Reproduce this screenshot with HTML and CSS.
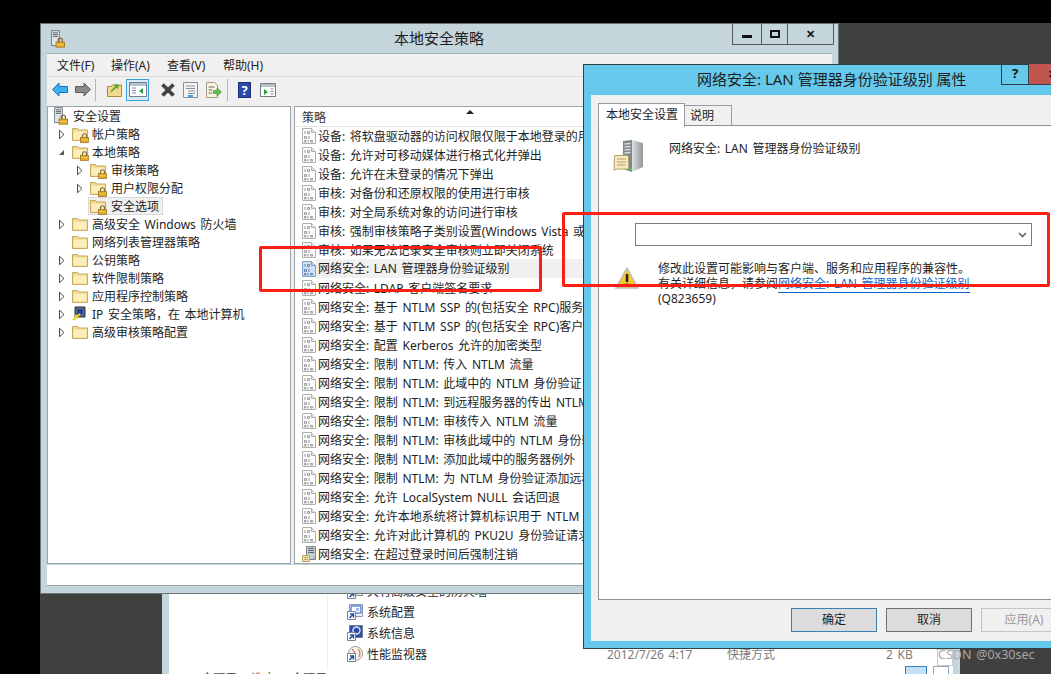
FILE: index.html
```html
<!DOCTYPE html>
<html lang="zh-CN">
<head>
    <meta charset="UTF-8">
    <title>本地安全策略</title>
    <link rel="stylesheet" href="styles.css">
</head>
<body>
    <svg class="defs" width="0" height="0">
        <defs>
            <symbol id="folder" viewBox="0 0 16 16">
                <path d="M.5 2.500h5l1 1.500h9v10.500H.5z" fill="#f1d88c" stroke="#c9a95c"/>
                <path d="M1.500 5.500h13v8h-13z" fill="#fbeebb"/>
            </symbol>
            <symbol id="lock" viewBox="0 0 10 11">
                <path d="M2.800 5V3a2.200 2.200 0 0 1 4.400 0v2" fill="none" stroke="#7d6a3a" stroke-width="1.300"/>
                <rect x=".5" y="5" width="9" height="5.500" fill="#dfa925" stroke="#99721c" stroke-width=".8"/>
                <path d="M1.500 7.500h7" stroke="#f3d26a"/>
            </symbol>
            <symbol id="policy" viewBox="0 0 14 16">
                <path d="M.5 .5h9l4 4v11H.5z" fill="#fbfbfb" stroke="#b0b0b0"/>
                <path d="M9.500 .5v4h4" fill="#e2e2e2" stroke="#b0b0b0"/>
                <path d="M3 3v3M5.500 3.500h2v2h-2zM2.500 8.500h2v2h-2zM7 8v3M2.500 12.500h1.500v1.500h-1.500zM6 12v2.500M8.500 12.500h2v1.500h-2z" fill="none" stroke="#9c9c9c"/>
            </symbol>
            <symbol id="policy-on" viewBox="0 0 14 16">
                <path d="M.5 .5h9l4 4v11H.5z" fill="#cfe0f5" stroke="#7e9fc9"/>
                <path d="M9.500 .5v4h4" fill="#b7cdea" stroke="#7e9fc9"/>
                <path d="M3 3v3M5.500 3.500h2v2h-2zM2.500 8.500h2v2h-2zM7 8v3M2.500 12.500h1.500v1.500h-1.500zM6 12v2.500M8.500 12.500h2v1.500h-2z" fill="none" stroke="#5f80ae"/>
            </symbol>
            <symbol id="server" viewBox="0 0 14 16">
                <path d="M4.500 .5h9v13h-9z" fill="#c9ced2" stroke="#7d8489"/>
                <path d="M6 2.500h6M6 4.500h6M6 6.500h6" stroke="#5d6468"/>
                <path d="M.5 9.500h7v6h-7z" fill="#f5e6b8" stroke="#b79f63"/>
                <path d="M2 11.500h4M2 13.500h4" stroke="#b79f63"/>
                <path d="M11 12h1.500" stroke="#58c04a"/>
            </symbol>
            <symbol id="shortcut" viewBox="0 0 9 9">
                <path d="M.5 .5h8v8h-8z" fill="#fff" stroke="#7b8490"/>
                <path d="M2.500 7l3-3M3 3h3.500v3.500" fill="none" stroke="#1a4fa0" stroke-width="1.500"/>
            </symbol>
            <symbol id="caret-open" viewBox="0 0 9 9">
                <path d="M2 7h5V2z" fill="#595959"/>
            </symbol>
            <symbol id="caret-closed" viewBox="0 0 9 11">
                <path d="M2.500 1.200l4.500 4.300-4.500 4.300z" fill="#fff" stroke="#4b4b4b"/>
            </symbol>
            <symbol id="sec-root" viewBox="0 0 17 20">
                <path d="M.5 .5h9v17h-9z" fill="#dfe3e6" stroke="#6d7478"/>
                <path d="M2 3h6M2 5h6M2 7h6" stroke="#555"/>
                <use href="#lock" x="5" y="8" width="11" height="12"/>
            </symbol>
        </defs>
    </svg>

    <div class="explorer">
        <div class="explorer-list">
            <div class="tool-row">
                <svg width="16" height="16" viewBox="0 0 16 16"><path d="M2.500 .5h13v12h-13z" fill="#f3f3f3" stroke="#8a8a8a"/><path d="M9 2h5v9H9z" fill="#c8392b"/><use href="#shortcut" x="0" y="7" width="9" height="9"/></svg>
                <span>具有高级安全的防火墙</span>
            </div>
            <div class="tool-row">
                <svg width="16" height="16" viewBox="0 0 16 16"><path d="M2.500 .5h13v12h-13z" fill="#e6eefb" stroke="#8a98a8"/><path d="M4 2h10v7H4z" fill="#fff" stroke="#1f55d0"/><path d="M9 4h3v3H9z" fill="#9dbdf0"/><use href="#shortcut" x="0" y="7" width="9" height="9"/></svg>
                <span>系统配置</span>
            </div>
            <div class="tool-row">
                <svg width="16" height="16" viewBox="0 0 16 16"><path d="M2.500 .5h13v12h-13z" fill="#2a4ea8" stroke="#6f7f95"/><circle cx="9.500" cy="5.500" r="3.500" fill="none" stroke="#dfe8fa" stroke-width="1.400"/><use href="#shortcut" x="0" y="7" width="9" height="9"/></svg>
                <span>系统信息</span>
            </div>
            <div class="tool-row">
                <svg width="16" height="16" viewBox="0 0 16 16"><circle cx="8.500" cy="7.500" r="7" fill="#f4f4f4" stroke="#9a9a9a"/><path d="M11 3c2.500 2 2.500 6 .5 8" fill="none" stroke="#e2913c" stroke-width="1.400"/><path d="M5 3l4 5" stroke="#c8392b"/><use href="#shortcut" x="0" y="7" width="9" height="9"/></svg>
                <span>性能监视器</span>
            </div>
        </div>
        <div class="explorer-status">34 个项目 &nbsp; 选中 1 个项目 1.08 KB</div>
        <div class="file-info">
            <span class="file-date">2012/7/26 4:17</span>
            <span class="file-type">快捷方式</span>
            <span class="file-size">2 KB</span>
        </div>
        <div class="file-check"></div>
        <div class="view-btns">
            <span class="view-btn view-on"></span>
            <span class="view-btn"></span>
        </div>
    </div>

    <div class="main-win">
        <div class="main-title">
            <svg class="title-icon" width="15" height="18"><use href="#sec-root"/></svg>
            <span class="main-title-text">本地安全策略</span>
            <div class="win-btns">
                <span class="win-btn btn-min"><i></i></span>
                <span class="win-btn btn-max"><i></i></span>
                <span class="win-btn btn-close">✕</span>
            </div>
        </div>
        <div class="menubar">
            <span>文件(F)</span>
            <span>操作(A)</span>
            <span>查看(V)</span>
            <span>帮助(H)</span>
        </div>
        <div class="toolbar">
            <svg class="tb tb-back" width="16" height="15" viewBox="0 0 16 15"><path d="M.5 7.500L7 1v3.500h8.500v6H7V14z" fill="#3fb0f0" stroke="#1b6fc0"/></svg>
            <svg class="tb tb-fwd" width="16" height="15" viewBox="0 0 16 15"><path d="M15.500 7.500L9 1v3.500H.5v6H9V14z" fill="#8a8a8a" stroke="#5c5c5c"/></svg>
            <span class="tb-sep"></span>
            <svg class="tb tb-up" width="15" height="15" viewBox="0 0 15 15"><path d="M.5 4.500h4l1-1.500h9v11.500H.5z" fill="#f2d98e" stroke="#a98a3f"/><path d="M3 11c1-3 3-5 5-6.500L7 2l5 1-1 4.500-1.500-2C8 7 6 9 3 11z" fill="#5aa82e"/></svg>
            <span class="tb-active">
                <svg width="18" height="15" viewBox="0 0 18 15"><path d="M.5 .5h17v14H.5z" fill="#fff" stroke="#6f7f8a"/><path d="M1 1h16v3H1z" fill="#b8c2cb"/><path d="M3 6h4M3 8.500h4M3 11h4" stroke="#7c8a95"/><path d="M14 6v6l-4-3z" fill="#2f9e44"/></svg>
            </span>
            <svg class="tb tb-x" width="16" height="14" viewBox="0 0 16 14"><path d="M2.500 1.500l11 11M13.500 1.500l-11 11" stroke="#444" stroke-width="3.800"/></svg>
            <svg class="tb tb-props" width="15" height="16" viewBox="0 0 15 16"><path d="M.5 .5h14v15H.5z" fill="#f3f3f3" stroke="#8a8f93"/><path d="M3 4h9M3 6.500h9M5 9h7M5 11.500h7" stroke="#8a9399"/><path d="M5 14h5" stroke="#39a7ea" stroke-width="2"/></svg>
            <svg class="tb tb-export" width="16" height="16" viewBox="0 0 16 16"><path d="M.5 .5h8l3 3v12H.5z" fill="#fbf4dc" stroke="#a09a86"/><path d="M2.500 5h6M2.500 8h4M2.500 11h4" stroke="#6b6b6b"/><path d="M7.500 8.500h3.500V6l4.500 4-4.500 4v-2.500H7.500z" fill="#62c04a" stroke="#2f8f2a" stroke-width=".6"/></svg>
            <span class="tb-sep"></span>
            <span class="tb-help">?</span>
            <svg class="tb" width="16" height="14" viewBox="0 0 16 14"><path d="M.5 .5h15v13H.5z" fill="#fff" stroke="#6f7f8a"/><path d="M1 1h14v3H1z" fill="#b8c2cb"/><path d="M10.500 6h3M10.500 8.500h3M10.500 11h3" stroke="#7c8a95"/><path d="M4 6v6l4-3z" fill="#2f9e44"/></svg>
        </div>

        <div class="panes">
            <div class="tree">
                <div class="tree-row lv0">
                    <svg class="tree-icon" width="15" height="18"><use href="#sec-root"/></svg>
                    <span>安全设置</span>
                </div>
                <div class="tree-row lv1"><svg class="caret" width="9" height="11"><use href="#caret-closed"/></svg><span class="folder locked"><svg width="16" height="16"><use href="#folder"/></svg><svg class="folder-lock" width="9" height="10"><use href="#lock"/></svg></span><span>帐户策略</span></div>
                <div class="tree-row lv1"><svg class="caret" width="9" height="9"><use href="#caret-open"/></svg><span class="folder locked"><svg width="16" height="16"><use href="#folder"/></svg><svg class="folder-lock" width="9" height="10"><use href="#lock"/></svg></span><span>本地策略</span></div>
                <div class="tree-row lv2"><svg class="caret" width="9" height="11"><use href="#caret-closed"/></svg><span class="folder locked"><svg width="16" height="16"><use href="#folder"/></svg><svg class="folder-lock" width="9" height="10"><use href="#lock"/></svg></span><span>审核策略</span></div>
                <div class="tree-row lv2"><svg class="caret" width="9" height="11"><use href="#caret-closed"/></svg><span class="folder locked"><svg width="16" height="16"><use href="#folder"/></svg><svg class="folder-lock" width="9" height="10"><use href="#lock"/></svg></span><span>用户权限分配</span></div>
                <div class="tree-row lv2"><span class="caret-gap"></span><span class="sel-box"><span class="folder locked"><svg width="16" height="16"><use href="#folder"/></svg><svg class="folder-lock" width="9" height="10"><use href="#lock"/></svg></span><span>安全选项</span></span></div>
                <div class="tree-row lv1"><svg class="caret" width="9" height="11"><use href="#caret-closed"/></svg><span class="folder"><svg width="16" height="16"><use href="#folder"/></svg></span><span>高级安全 Windows 防火墙</span></div>
                <div class="tree-row lv1"><span class="caret-gap"></span><span class="folder"><svg width="16" height="16"><use href="#folder"/></svg></span><span>网络列表管理器策略</span></div>
                <div class="tree-row lv1"><svg class="caret" width="9" height="11"><use href="#caret-closed"/></svg><span class="folder"><svg width="16" height="16"><use href="#folder"/></svg></span><span>公钥策略</span></div>
                <div class="tree-row lv1"><svg class="caret" width="9" height="11"><use href="#caret-closed"/></svg><span class="folder"><svg width="16" height="16"><use href="#folder"/></svg></span><span>软件限制策略</span></div>
                <div class="tree-row lv1"><svg class="caret" width="9" height="11"><use href="#caret-closed"/></svg><span class="folder"><svg width="16" height="16"><use href="#folder"/></svg></span><span>应用程序控制策略</span></div>
                <div class="tree-row lv1"><svg class="caret" width="9" height="11"><use href="#caret-closed"/></svg><span class="folder"><svg width="16" height="16" viewBox="0 0 16 16"><path d="M3 1h10v10H3z" fill="#5b6b7a" stroke="#333"/><path d="M5 3h6v5H5z" fill="#2a3fa0"/><path d="M1 14l7-6M3 9l3 3" stroke="#e8d220" stroke-width="2"/></svg></span><span>IP 安全策略，在 本地计算机</span></div>
                <div class="tree-row lv1"><svg class="caret" width="9" height="11"><use href="#caret-closed"/></svg><span class="folder"><svg width="16" height="16"><use href="#folder"/></svg></span><span>高级审核策略配置</span></div>
            </div>
            <div class="list">
                <div class="list-head"><span>策略</span><i class="sort-mark"></i></div>
                <div class="list-row"><svg width="14" height="16"><use href="#policy"/></svg><span>设备: 将软盘驱动器的访问权限仅限于本地登录的用户</span></div>
                <div class="list-row"><svg width="14" height="16"><use href="#policy"/></svg><span>设备: 允许对可移动媒体进行格式化并弹出</span></div>
                <div class="list-row"><svg width="14" height="16"><use href="#policy"/></svg><span>设备: 允许在未登录的情况下弹出</span></div>
                <div class="list-row"><svg width="14" height="16"><use href="#policy"/></svg><span>审核: 对备份和还原权限的使用进行审核</span></div>
                <div class="list-row"><svg width="14" height="16"><use href="#policy"/></svg><span>审核: 对全局系统对象的访问进行审核</span></div>
                <div class="list-row"><svg width="14" height="16"><use href="#policy"/></svg><span>审核: 强制审核策略子类别设置(Windows Vista 或更高版本)以替代审核策略类别设置</span></div>
                <div class="list-row"><svg width="14" height="16"><use href="#policy"/></svg><span>审核: 如果无法记录安全审核则立即关闭系统</span></div>
                <div class="list-row row-on"><svg width="14" height="16"><use href="#policy-on"/></svg><span>网络安全: LAN 管理器身份验证级别</span></div>
                <div class="list-row"><svg width="14" height="16"><use href="#policy"/></svg><span>网络安全: LDAP 客户端签名要求</span></div>
                <div class="list-row"><svg width="14" height="16"><use href="#policy"/></svg><span>网络安全: 基于 NTLM SSP 的(包括安全 RPC)服务器的最小会话安全</span></div>
                <div class="list-row"><svg width="14" height="16"><use href="#policy"/></svg><span>网络安全: 基于 NTLM SSP 的(包括安全 RPC)客户端的最小会话安全</span></div>
                <div class="list-row"><svg width="14" height="16"><use href="#policy"/></svg><span>网络安全: 配置 Kerberos 允许的加密类型</span></div>
                <div class="list-row"><svg width="14" height="16"><use href="#policy"/></svg><span>网络安全: 限制 NTLM: 传入 NTLM 流量</span></div>
                <div class="list-row"><svg width="14" height="16"><use href="#policy"/></svg><span>网络安全: 限制 NTLM: 此域中的 NTLM 身份验证</span></div>
                <div class="list-row"><svg width="14" height="16"><use href="#policy"/></svg><span>网络安全: 限制 NTLM: 到远程服务器的传出 NTLM 流量</span></div>
                <div class="list-row"><svg width="14" height="16"><use href="#policy"/></svg><span>网络安全: 限制 NTLM: 审核传入 NTLM 流量</span></div>
                <div class="list-row"><svg width="14" height="16"><use href="#policy"/></svg><span>网络安全: 限制 NTLM: 审核此域中的 NTLM 身份验证</span></div>
                <div class="list-row"><svg width="14" height="16"><use href="#policy"/></svg><span>网络安全: 限制 NTLM: 添加此域中的服务器例外</span></div>
                <div class="list-row"><svg width="14" height="16"><use href="#policy"/></svg><span>网络安全: 限制 NTLM: 为 NTLM 身份验证添加远程服务器例外</span></div>
                <div class="list-row"><svg width="14" height="16"><use href="#policy"/></svg><span>网络安全: 允许 LocalSystem NULL 会话回退</span></div>
                <div class="list-row"><svg width="14" height="16"><use href="#policy"/></svg><span>网络安全: 允许本地系统将计算机标识用于 NTLM</span></div>
                <div class="list-row"><svg width="14" height="16"><use href="#policy"/></svg><span>网络安全: 允许对此计算机的 PKU2U 身份验证请求使用联机标识</span></div>
                <div class="list-row"><svg width="14" height="16"><use href="#server"/></svg><span>网络安全: 在超过登录时间后强制注销</span></div>
            </div>
        </div>
        <div class="statusbar"></div>
    </div>

    <div class="dialog">
        <div class="dialog-title">
            <span class="dialog-title-text">网络安全: LAN 管理器身份验证级别 属性</span>
            <div class="dialog-btns">
                <span class="dialog-help">?</span>
                <span class="dialog-close">✕</span>
            </div>
        </div>
        <div class="dialog-body">
            <div class="tabs">
                <span class="tab tab-on">本地安全设置</span>
                <span class="tab">说明</span>
            </div>
            <div class="tab-panel">
                <div class="policy-head">
                    <svg width="32" height="32" viewBox="0 0 32 32">
                        <defs>
                            <linearGradient id="towerSide" x1="0" x2="1" y1="0" y2="0">
                                <stop offset="0" stop-color="#dfe3e5"/>
                                <stop offset="1" stop-color="#8f9699"/>
                            </linearGradient>
                        </defs>
                        <path d="M10 1l9-1v32l-9-3z" fill="#7f8689"/>
                        <path d="M19 0l11 3v24l-11 5z" fill="url(#towerSide)"/>
                        <path d="M11.500 4l6-.5M11.500 7l6-.5M11.500 10l6-.5M11.500 13l6-.5" stroke="#d9dcde" stroke-width="1.500"/>
                        <path d="M1.500 15.500h13l1 1.500v12H3l-2 1.500z" fill="#f5e9c2" stroke="#b7a26a"/>
                        <path d="M4 19h9M4 22h9M4 25h9" stroke="#b7a26a"/>
                        <circle cx="18" cy="29" r="1.300" fill="#58c04a"/>
                    </svg>
                    <span>网络安全: LAN 管理器身份验证级别</span>
                </div>
                <div class="combo">
                    <svg width="9" height="6" viewBox="0 0 9 6"><path d="M1 1l3.500 3.500L8 1" fill="none" stroke="#666" stroke-width="1.700"/></svg>
                </div>
                <div class="warn">
                    <svg class="warn-icon" width="24" height="22" viewBox="0 0 24 22">
                        <path d="M12 1L23 21H1z" fill="#f7c92f" stroke="#bdbdbd" stroke-width="1.500"/>
                        <path d="M12 7v8" stroke="#222" stroke-width="2.500"/>
                        <path d="M12 16.500v2.500" stroke="#222" stroke-width="2.500"/>
                    </svg>
                    <div class="warn-text">
                        <div>修改此设置可能影响与客户端、服务和应用程序的兼容性。</div>
                        <div>有关详细信息，请参阅<a class="warn-link">网络安全: LAN 管理器身份验证级别</a></div>
                        <div>(Q823659)</div>
                    </div>
                </div>
            </div>
            <div class="dialog-foot">
                <span class="push push-default">确定</span>
                <span class="push">取消</span>
                <span class="push push-off">应用(A)</span>
            </div>
        </div>
    </div>

    <div class="mark mark-list"></div>
    <div class="mark mark-combo"></div>
    <div class="watermark">CSDN @0x30sec</div>
</body>
</html>
```
FILE: styles.css
```css
* {
    margin: 0;
    padding: 0;
    box-sizing: border-box;
}

html, body {
    width: 1051px;
    height: 674px;
    overflow: hidden;
}

body {
    position: relative;
    background: #404040;
    font-family: "Noto Sans", "Noto Sans CJK SC", sans-serif;
    font-size: 12px;
    word-spacing: 1.5px;
    color: #1e1e1e;
    border-top: 23px solid #000;
    border-left: 40px solid #000;
}

.defs {
    position: absolute;
}

/* explorer window behind everything */
.explorer {
    position: absolute;
    left: 122px;
    top: 500px;
    width: 798px;
    height: 151px;
    background: #fff;
    border-left: 7px solid #c4d5dc;
    border-right: 7px solid #c4d5dc;
    overflow: hidden;
}

.explorer-list {
    position: absolute;
    left: 158px;
    top: 57px;
    width: 200px;
    height: 90px;
    padding-left: 19px;
    border-left: 1px solid #efefef;
}

.tool-row {
    display: flex;
    align-items: center;
    gap: 4px;
    height: 21px;
}

.tool-row svg {
    flex: none;
}

.explorer-status {
    position: absolute;
    left: 14px;
    top: 146px;
    color: #555;
    white-space: nowrap;
}

.file-info {
    position: absolute;
    left: 438px;
    top: 123px;
    width: 320px;
    height: 18px;
    color: #7c7c7c;
    line-height: 18px;
}

.file-info span {
    position: absolute;
    top: 0;
    white-space: nowrap;
}

.file-date { left: 0; }
.file-type { left: 120px; }
.file-size { left: 279px; }

.file-check {
    position: absolute;
    left: 768px;
    top: 126px;
    width: 16px;
    height: 17px;
    background: #fff;
    border: 1px solid #c8c8c8;
}

.view-btns {
    position: absolute;
    left: 736px;
    top: 143px;
    display: flex;
    gap: 6px;
}

.view-btn {
    display: block;
    width: 16px;
    height: 12px;
    background: #fff;
    border: 1px solid #8fa6bd;
}

.view-on {
    width: 22px;
    background: #c3e0f6;
    border-color: #3d7fb5;
}

/* main console window */
.main-win {
    position: absolute;
    left: 0;
    top: 0;
    width: 799px;
    height: 571px;
    background: #c4d5dc;
    border: 1px solid #6d7478;
    padding: 0 6px 7px;
    display: flex;
    flex-direction: column;
}

.main-title {
    position: relative;
    height: 29px;
    flex: none;
    display: flex;
    align-items: center;
    justify-content: center;
}

.title-icon {
    position: absolute;
    left: 4px;
    top: 6px;
}

.main-title-text {
    font-size: 15px;
    margin: 0 1px 2px 0;
}

.win-btns {
    position: absolute;
    right: -2px;
    top: -1px;
    display: flex;
    height: 22px;
    border: 1px solid #55595c;
    border-top: 0;
}

.win-btn {
    display: flex;
    align-items: center;
    justify-content: center;
    border-left: 1px solid #55595c;
}

.win-btn:first-child {
    border-left: 0;
}

.btn-min { width: 28px; }
.btn-max { width: 26px; }
.btn-close { width: 46px; font-size: 11px; font-weight: 700; color: #111; }

.btn-min i {
    display: block;
    width: 10px;
    height: 3px;
    background: #111;
    margin-top: 5px;
}

.btn-max i {
    display: block;
    width: 10px;
    height: 8px;
    border: 2px solid #111;
}

.menubar {
    height: 23px;
    flex: none;
    background: #f0f0f0;
    border-top: 1px solid #a9b2b7;
    display: flex;
    align-items: center;
    padding-left: 10px;
    word-spacing: 0;
}

.menubar span {
    width: 56px;
}

.menubar span:first-child {
    width: 54px;
}

.toolbar {
    height: 30px;
    flex: none;
    background: #f0f0f0;
    border-top: 1px solid #dcdcdc;
    display: flex;
    align-items: center;
    padding: 0 0 4px 5px;
}

.tb {
    flex: none;
}

.tb-back { margin-right: 7px; }
.tb-fwd { margin-right: 4px; }
.tb-up { margin-right: 4px; }
.tb-x { margin-right: 7px; }
.tb-props { margin-right: 8px; }
.tb-export { margin-right: 5px; }

.tb-sep {
    width: 1px;
    height: 22px;
    flex: none;
    background: #b5b5b5;
    margin-right: 11px;
}

.tb-export + .tb-sep {
    margin-right: 10px;
}

.tb-active {
    display: flex;
    align-items: center;
    justify-content: center;
    flex: none;
    width: 23px;
    height: 22px;
    background: #d7ebfa;
    border: 1px solid #3aa0e0;
    margin-right: 11px;
}

.tb-help {
    width: 13px;
    height: 16px;
    flex: none;
    background: #2b4ba8;
    border: 1px solid #1b2f78;
    color: #fff;
    font-size: 13px;
    font-weight: 700;
    line-height: 14px;
    text-align: center;
    margin-right: 9px;
}

.panes {
    flex: 1;
    display: flex;
    gap: 3px;
    background: #f0f0f0;
    min-height: 0;
}

.tree {
    width: 244px;
    flex: none;
    background: #fff;
    border: 1px solid #9ca3a8;
}

.tree-row {
    height: 18px;
    display: flex;
    align-items: center;
    white-space: nowrap;
}

.tree-icon {
    margin-right: 4px;
}

.lv0 { padding-left: 6px; }
.lv1 { padding-left: 9px; }
.lv2 { padding-left: 27px; }

.caret,
.caret-gap {
    display: block;
    flex: none;
    width: 9px;
    margin-right: 6px;
}

.folder {
    position: relative;
    display: block;
    width: 16px;
    height: 16px;
    flex: none;
    margin-right: 4px;
}

.lv2 .folder {
    margin-right: 5px;
}

.folder svg {
    display: block;
}

.folder .folder-lock {
    position: absolute;
    right: -1px;
    bottom: -1px;
}

.sel-box {
    display: flex;
    align-items: center;
    height: 18px;
    padding: 0 3px 0 1px;
    margin-left: -2px;
    background: #f0f0f0;
    border: 1px solid #d9d9d9;
}

.list {
    flex: 1;
    background: #fff;
    border: 1px solid #9ca3a8;
    border-right: 0;
    overflow: hidden;
    min-width: 0;
}

.list-head {
    position: relative;
    height: 20px;
    border-bottom: 1px solid #e5e5e5;
    padding: 2px 0 0 7px;
    line-height: 18px;
    color: #333;
}

.sort-mark {
    position: absolute;
    left: 171px;
    top: 3px;
    width: 0;
    height: 0;
    border-left: 4px solid transparent;
    border-right: 4px solid transparent;
    border-bottom: 4px solid #222;
}

.list-row {
    height: 19px;
    display: flex;
    align-items: center;
    gap: 2px;
    padding-left: 7px;
    white-space: nowrap;
    position: relative;
    top: -1px;
}

.list-row svg {
    flex: none;
}

.row-on span {
    display: block;
    flex: 1;
    height: 19px;
    line-height: 19px;
    background: #f0f0f0;
    margin-left: -2px;
    padding-left: 2px;
}

.statusbar {
    height: 21px;
    flex: none;
    background: #fff;
    border-bottom: 1px solid #9ca3a8;
    margin-top: 1px;
}

/* properties dialog */
.dialog {
    position: absolute;
    left: 543px;
    top: 41px;
    width: 490px;
    height: 585px;
    background: #66c8ea;
    border: 1px solid #2f3f46;
    padding: 0 0 7px 7px;
    display: flex;
    flex-direction: column;
}

.dialog-title {
    position: relative;
    height: 30px;
    flex: none;
    display: flex;
    align-items: center;
}

.dialog-title-text {
    font-size: 15px;
    word-spacing: 0;
    margin: 0 0 4px 106px;
    white-space: nowrap;
}

.dialog-btns {
    position: absolute;
    left: 410px;
    top: -1px;
    display: flex;
    height: 21px;
}

.dialog-help {
    width: 28px;
    border: 1px solid #2f3f46;
    border-top: 0;
    text-align: center;
    font-size: 13px;
    font-weight: 700;
    line-height: 19px;
    color: #111;
}

.dialog-close {
    width: 46px;
    background: #c0564f;
    border-bottom: 1px solid #2f3f46;
    text-align: center;
    font-size: 11px;
    font-weight: 700;
    line-height: 19px;
    color: #111;
}

.dialog-body {
    flex: 1;
    background: #f0f0f0;
    padding: 8px 0 0 7px;
    display: flex;
    flex-direction: column;
    min-height: 0;
}

.tabs {
    display: flex;
    align-items: flex-end;
    height: 22px;
    flex: none;
    position: relative;
    z-index: 1;
}

.tab {
    display: block;
    width: 47px;
    height: 20px;
    padding-left: 5px;
    line-height: 19px;
    background: #f0f0f0;
    border: 1px solid #9a9a9a;
    border-left: 0;
    border-bottom: 0;
}

.tab-on {
    width: 87px;
    height: 24px;
    padding-left: 7px;
    line-height: 21px;
    background: #fff;
    border-left: 1px solid #9a9a9a;
    margin-bottom: -2px;
}

.tab-panel {
    flex: 1;
    background: #fff;
    border: 1px solid #8a8f93;
    border-right: 0;
    padding: 14px 0 0 14px;
    min-height: 0;
}

.policy-head {
    display: flex;
    align-items: flex-start;
    gap: 24px;
    height: 83px;
    line-height: 18px;
}

.policy-head svg {
    flex: none;
}

.policy-head span {
    white-space: nowrap;
}

.combo {
    width: 397px;
    height: 23px;
    margin-left: 22px;
    border: 1px solid #7c7c7c;
    display: flex;
    align-items: center;
    justify-content: flex-end;
    padding-right: 4px;
}

.warn {
    display: flex;
    margin-top: 15px;
    margin-left: 2px;
}

.warn-icon {
    flex: none;
    margin: 6px 19px 0 0;
}

.warn-text {
    line-height: 15px;
    white-space: nowrap;
}

.warn-link {
    color: #0a66c8;
    border-bottom: 1px solid #0a66c8;
}

.dialog-foot {
    height: 41px;
    flex: none;
    display: flex;
    padding: 8px 0 0 193px;
    gap: 9px;
}

.push {
    display: block;
    width: 86px;
    height: 24px;
    flex: none;
    background: #dcdcdc;
    border: 1px solid #707070;
    text-align: center;
    line-height: 22px;
}

.push-default {
    border-color: #3c7fb1;
}

.push-off {
    background: #f0f0f0;
    border-color: #c4c4c4;
    color: #9a9a9a;
}

/* annotations on top of the screenshot */
.mark {
    position: absolute;
    border: 3px solid #fb1f14;
    border-radius: 2px;
}

.mark-list {
    left: 219px;
    top: 223px;
    width: 283px;
    height: 46px;
}

.mark-combo {
    left: 522px;
    top: 189px;
    width: 488px;
    height: 75px;
}

.watermark {
    position: absolute;
    left: 898px;
    top: 623px;
    font-size: 12.5px;
    line-height: 18px;
    color: #a8a8a8;
    white-space: nowrap;
}
```
